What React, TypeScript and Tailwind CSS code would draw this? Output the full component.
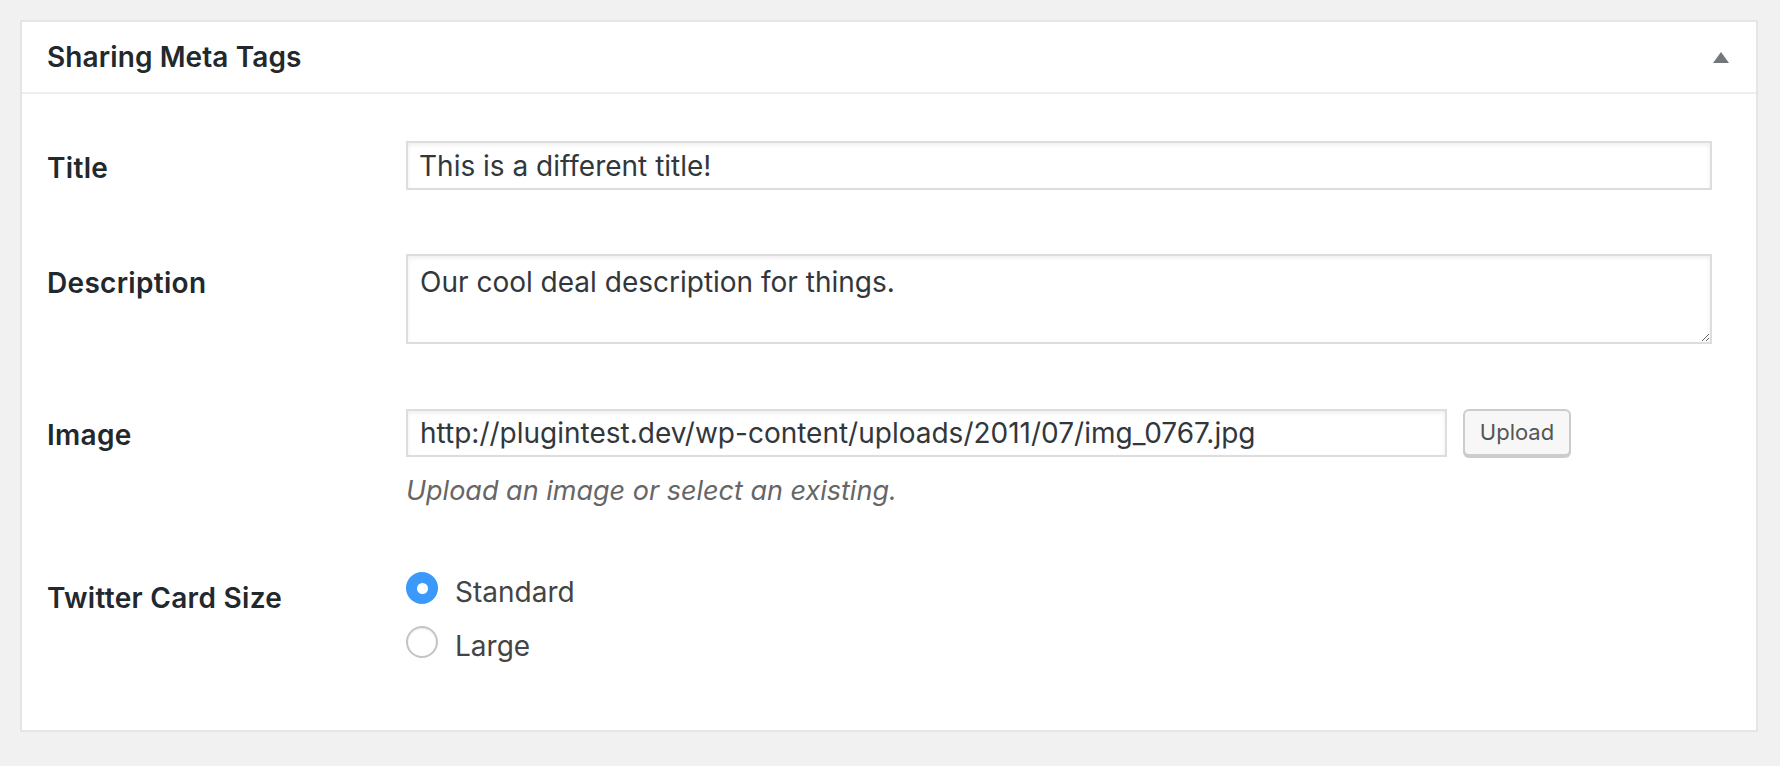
import React, { useState } from "react";

// Sharing meta tags box, drawn at 2x like the screenshot
const font = { fontFamily: "Inter, 'Noto Sans', sans-serif" };

const Radio = ({ checked, label, onClick }: { checked: boolean; label: string; onClick: () => void }) => (
  <div className="flex h-[32px] items-start gap-[17px] cursor-pointer" onClick={onClick}>
    {checked ? (
      <span className="flex h-[32px] w-[32px] shrink-0 items-center justify-center rounded-full bg-[#3b99fc]">
        <span className="h-[11px] w-[11px] rounded-full bg-white" />
      </span>
    ) : (
      <span className="h-[32px] w-[32px] shrink-0 rounded-full border-2 border-[#c4c4c4] bg-white shadow-[inset_0_1px_2px_rgba(0,0,0,0.08)]" />
    )}
    <span className="mt-[2px] text-[28px] leading-[36px] text-[#444]">{label}</span>
  </div>
);

const App = () => {
  const [title, setTitle] = useState("This is a different title!");
  const [description, setDescription] = useState("Our cool deal description for things.");
  const [image, setImage] = useState("http://plugintest.dev/wp-content/uploads/2011/07/img_0767.jpg");
  const [cardSize, setCardSize] = useState<"standard" | "large">("standard");

  return (
    <div className="min-h-[766px] w-full bg-[#f1f1f1] pt-[20px]" style={font}>
      <div className="ml-[20px] w-[1738px] border-2 border-[#e5e5e5] bg-white">
        <div className="flex h-[72px] items-center justify-between border-b-2 border-[#eee] pl-[25px] pr-[27px]">
          <h2 className="text-[28px] font-semibold leading-[36px] tracking-[0.1px] text-[#23282d]">Sharing Meta Tags</h2>
          <svg width="16" height="11" viewBox="0 0 16 11">
            <polygon points="8,0 16,11 0,11" fill="#72777c" />
          </svg>
        </div>

        <div className="pb-[72px] pl-[25px] pt-[47px]">
          {/* Title */}
          <div className="flex items-start">
            <label className="w-[359px] shrink-0 pt-[9px] text-[28px] font-semibold leading-[36px] tracking-[0.3px] text-[#23282d]">Title</label>
            <input
              type="text"
              value={title}
              onChange={(e) => setTitle(e.target.value)}
              className="h-[49px] w-[1306px] border-2 border-[#ddd] pl-[11px] text-[28px] leading-[36px] text-[#32373c] shadow-[inset_0_2px_4px_rgba(0,0,0,0.07)] outline-none"
            />
          </div>

          {/* Description */}
          <div className="mt-[64px] flex items-start">
            <label className="w-[359px] shrink-0 pt-[11px] text-[28px] font-semibold leading-[36px] tracking-[0.3px] text-[#23282d]">Description</label>
            <textarea
              value={description}
              onChange={(e) => setDescription(e.target.value)}
              className="h-[90px] w-[1306px] border-2 border-[#ddd] px-[12px] pt-[8px] text-[28px] leading-[36px] text-[#32373c] shadow-[inset_0_2px_4px_rgba(0,0,0,0.07)] outline-none"
            />
          </div>

          {/* Image */}
          <div className="mt-[65px] flex items-start">
            <label className="w-[359px] shrink-0 pt-[8px] text-[28px] font-semibold leading-[36px] tracking-[0.3px] text-[#23282d]">Image</label>
            <div className="flex flex-col">
              <div className="flex items-start gap-[16px]">
                <input
                  type="text"
                  value={image}
                  onChange={(e) => setImage(e.target.value)}
                  className="h-[48px] w-[1041px] border-2 border-[#ddd] pl-[12px] text-[28px] leading-[36px] text-[#32373c] shadow-[inset_0_2px_4px_rgba(0,0,0,0.07)] outline-none"
                />
                <button
                  type="button"
                  className="h-[47px] w-[108px] rounded-[6px] border-2 border-[#ccc] bg-[#f7f7f7] text-[22px] text-[#555] shadow-[0_2px_0_#ccc]"
                >
                  Upload
                </button>
              </div>
              <p className="mt-[16px] text-[27px] italic leading-[35px] text-[#666]">Upload an image or select an existing.</p>
            </div>
          </div>

          {/* Twitter card size */}
          <div className="mt-[64px] flex items-start">
            <label className="w-[359px] shrink-0 pt-[8px] text-[28px] font-semibold leading-[36px] tracking-[0.3px] text-[#23282d]">Twitter Card Size</label>
            <div className="flex flex-col gap-[22px]">
              <Radio checked={cardSize === "standard"} label="Standard" onClick={() => setCardSize("standard")} />
              <Radio checked={cardSize === "large"} label="Large" onClick={() => setCardSize("large")} />
            </div>
          </div>
        </div>
      </div>
    </div>
  );
};

export default App;
